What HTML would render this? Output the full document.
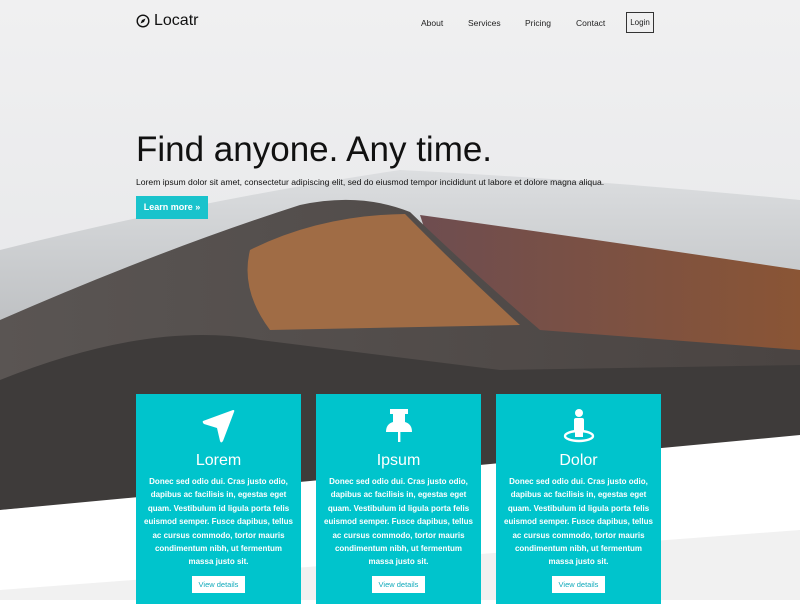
<!DOCTYPE html>
<html><head><style>
*{margin:0;padding:0;box-sizing:border-box}
body{width:800px;height:600px;overflow:hidden;position:relative;font-family:"Liberation Sans",sans-serif;background:#fff}
svg.bg{position:absolute;left:0;top:0}
.logo{position:absolute;left:136px;top:12px;font-size:16px;color:#111;display:flex;align-items:center;gap:4px}
.nav a{position:absolute;top:18px;font-size:8.5px;color:#222;text-decoration:none}
.login{position:absolute;left:626px;top:12px;width:28px;height:21px;border:1px solid #333;font-size:8px;text-align:center;line-height:19px;color:#222}
h1{position:absolute;left:136px;top:130px;font-size:35px;font-weight:normal;color:#111}
.sub{position:absolute;left:136px;top:177px;font-size:8.6px;color:#111}
.btn{position:absolute;left:136px;top:196px;width:72px;height:23px;background:#19c3cc;color:#fff;font-size:9px;font-weight:bold;line-height:23px;text-align:center}
.card{position:absolute;top:394px;width:165px;height:210px;background:#00c4cc;color:#fff;text-align:center}
.card svg{position:absolute;left:66px;top:14px}
.card h3{position:absolute;width:100%;top:58px;font-weight:normal;font-size:16px}
.card p{position:absolute;top:81px;left:0;right:0;font-size:8px;font-weight:bold;line-height:13.4px;white-space:nowrap}
.card .vd{position:absolute;left:56px;top:182px;width:53px;height:17px;background:#fff;color:#1ab;font-size:7.5px;line-height:17px}
</style></head><body>
<svg class="bg" width="800" height="600">
<defs>
<linearGradient id="sky" x1="0" y1="0" x2="0" y2="1"><stop offset="0" stop-color="#f0f0f1"/><stop offset=".6" stop-color="#e6e7e9"/><stop offset="1" stop-color="#cfd1d3"/></linearGradient>
<linearGradient id="haze" x1="0" y1="0" x2="0" y2="1"><stop offset="0" stop-color="#dcdee0"/><stop offset="1" stop-color="#9a9da0"/></linearGradient>
<linearGradient id="right" x1="0" y1="0" x2="1" y2="0"><stop offset="0" stop-color="#6e4d50"/><stop offset="1" stop-color="#8a5535"/></linearGradient>
<linearGradient id="left" x1="0" y1="0" x2="1" y2="0"><stop offset="0" stop-color="#5a5553"/><stop offset="1" stop-color="#4a4442"/></linearGradient>
</defs>
<rect width="800" height="600" fill="url(#sky)"/>
<path d="M0 250 Q200 200 400 170 Q600 180 800 200 L800 440 L0 510Z" fill="url(#haze)"/>
<path d="M420 215 Q600 240 800 270 L800 440 L500 460Z" fill="url(#right)"/>
<path d="M0 320 Q160 250 300 205 Q360 192 410 212 Q470 270 540 330 L800 350 L800 440 L0 510Z" fill="url(#left)"/>
<path d="M250 250 Q320 215 405 214 Q460 270 520 325 L270 330 Q240 290 250 250Z" fill="#a06c45"/>
<path d="M0 380 Q150 320 260 340 L500 370 L800 365 L800 440 L0 510Z" fill="#3e3b3a"/>
<path d="M0 510 L800 435 L800 600 L0 600Z" fill="#fff"/>
<path d="M0 600 L0 590 L800 530 L800 600Z" fill="#f1f1f1"/>
</svg>
<div class="logo"><svg width="14" height="14" viewBox="0 0 14 14"><circle cx="7" cy="7" r="5.8" fill="none" stroke="#111" stroke-width="1.4"/><path d="M9.5 4.5 L6 6 L4.5 9.5 L8 8Z" fill="#111"/></svg>Locatr</div>
<div class="nav">
<a style="left:421px">About</a><a style="left:468px">Services</a><a style="left:525px">Pricing</a><a style="left:576px">Contact</a>
</div>
<div class="login">Login</div>
<h1>Find anyone. Any time.</h1>
<div class="sub">Lorem ipsum dolor sit amet, consectetur adipiscing elit, sed do eiusmod tempor incididunt ut labore et dolore magna aliqua.</div>
<div class="btn">Learn more »</div>

<div class="card" style="left:136px"><svg width="34" height="36" viewBox="0 0 34 36"><path d="M1 13 L31 2 Q33 2 32 4 L21 33 Q19 36 18 33 L15 20 L2 16 Q0 14 1 13Z" fill="#fff"/></svg><h3>Lorem</h3><p>Donec sed odio dui. Cras justo odio,<br>dapibus ac facilisis in, egestas eget<br>quam. Vestibulum id ligula porta felis<br>euismod semper. Fusce dapibus, tellus<br>ac cursus commodo, tortor mauris<br>condimentum nibh, ut fermentum<br>massa justo sit.</p><div class="vd">View details</div></div>
<div class="card" style="left:316px"><svg width="34" height="36" viewBox="0 0 34 36"><path d="M8 1 H26 V6 H23 V14 Q30 16 30 24 H4 Q4 16 11 14 V6 H8Z" fill="#fff"/><rect x="16" y="24" width="2.4" height="10" fill="#fff"/></svg><h3>Ipsum</h3><p>Donec sed odio dui. Cras justo odio,<br>dapibus ac facilisis in, egestas eget<br>quam. Vestibulum id ligula porta felis<br>euismod semper. Fusce dapibus, tellus<br>ac cursus commodo, tortor mauris<br>condimentum nibh, ut fermentum<br>massa justo sit.</p><div class="vd">View details</div></div>
<div class="card" style="left:496px"><svg width="34" height="36" viewBox="0 0 34 36"><circle cx="17" cy="5" r="4" fill="#fff"/><rect x="12" y="10" width="10" height="14" rx="2" fill="#fff"/><ellipse cx="17" cy="28" rx="14" ry="5" fill="none" stroke="#fff" stroke-width="2.4"/><rect x="13" y="20" width="8" height="9" fill="#fff"/></svg><h3>Dolor</h3><p>Donec sed odio dui. Cras justo odio,<br>dapibus ac facilisis in, egestas eget<br>quam. Vestibulum id ligula porta felis<br>euismod semper. Fusce dapibus, tellus<br>ac cursus commodo, tortor mauris<br>condimentum nibh, ut fermentum<br>massa justo sit.</p><div class="vd">View details</div></div>
</body></html>
